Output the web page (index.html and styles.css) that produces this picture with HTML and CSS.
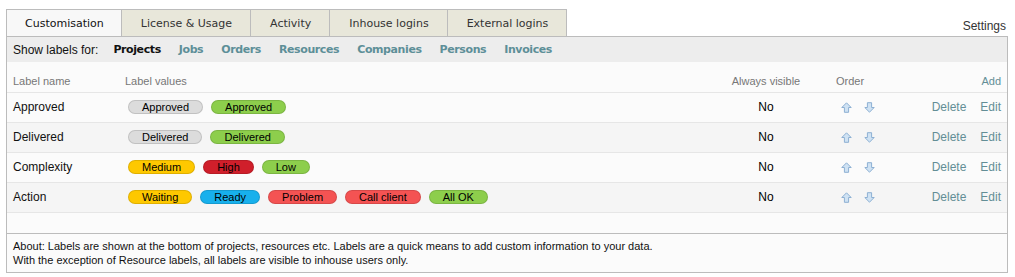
FILE: index.html
```html
<!DOCTYPE html>
<html>
<head>
<meta charset="utf-8">
<link rel="stylesheet" href="styles.css">
</head>
<body>
<div class="top">
  <ul class="tabs">
    <li class="tab active">Customisation</li>
    <li class="tab">License &amp; Usage</li>
    <li class="tab">Activity</li>
    <li class="tab">Inhouse logins</li>
    <li class="tab">External logins</li>
  </ul>
  <div class="settings">Settings</div>
</div>
<div class="panel">
  <div class="filter">
    <span class="filter-label">Show labels for:</span>
    <span class="fl current">Projects</span>
    <span class="fl">Jobs</span>
    <span class="fl">Orders</span>
    <span class="fl">Resources</span>
    <span class="fl">Companies</span>
    <span class="fl">Persons</span>
    <span class="fl">Invoices</span>
  </div>
  <table class="labels">
    <colgroup>
      <col class="c-name"><col class="c-values"><col class="c-vis"><col class="c-order"><col class="c-act">
    </colgroup>
    <thead>
      <tr>
        <th class="name">Label name</th>
        <th>Label values</th>
        <th class="vis">Always visible</th>
        <th class="order-h">Order</th>
        <th class="act"><span class="link">Add</span></th>
      </tr>
    </thead>
    <tbody>
      <tr>
        <td class="name">Approved</td>
        <td class="values"><span class="pill gray">Approved</span><span class="pill green">Approved</span></td>
        <td class="vis">No</td>
        <td class="order"><svg class="arr" viewBox="0 0 11 11"><path d="M5.5 0.8 L10.2 5.5 L7.6 5.5 L7.6 10.3 L3.4 10.3 L3.4 5.5 L0.8 5.5 Z"/></svg><svg class="arr down" viewBox="0 0 11 11"><path d="M5.5 10.2 L10.2 5.5 L7.6 5.5 L7.6 0.7 L3.4 0.7 L3.4 5.5 L0.8 5.5 Z"/></svg></td>
        <td class="act"><span class="link">Delete</span><span class="link">Edit</span></td>
      </tr>
      <tr class="alt">
        <td class="name">Delivered</td>
        <td class="values"><span class="pill gray">Delivered</span><span class="pill green">Delivered</span></td>
        <td class="vis">No</td>
        <td class="order"><svg class="arr" viewBox="0 0 11 11"><path d="M5.5 0.8 L10.2 5.5 L7.6 5.5 L7.6 10.3 L3.4 10.3 L3.4 5.5 L0.8 5.5 Z"/></svg><svg class="arr down" viewBox="0 0 11 11"><path d="M5.5 10.2 L10.2 5.5 L7.6 5.5 L7.6 0.7 L3.4 0.7 L3.4 5.5 L0.8 5.5 Z"/></svg></td>
        <td class="act"><span class="link">Delete</span><span class="link">Edit</span></td>
      </tr>
      <tr>
        <td class="name">Complexity</td>
        <td class="values"><span class="pill yellow">Medium</span><span class="pill red">High</span><span class="pill green">Low</span></td>
        <td class="vis">No</td>
        <td class="order"><svg class="arr" viewBox="0 0 11 11"><path d="M5.5 0.8 L10.2 5.5 L7.6 5.5 L7.6 10.3 L3.4 10.3 L3.4 5.5 L0.8 5.5 Z"/></svg><svg class="arr down" viewBox="0 0 11 11"><path d="M5.5 10.2 L10.2 5.5 L7.6 5.5 L7.6 0.7 L3.4 0.7 L3.4 5.5 L0.8 5.5 Z"/></svg></td>
        <td class="act"><span class="link">Delete</span><span class="link">Edit</span></td>
      </tr>
      <tr class="alt">
        <td class="name">Action</td>
        <td class="values"><span class="pill yellow">Waiting</span><span class="pill blue">Ready</span><span class="pill salmon">Problem</span><span class="pill salmon">Call client</span><span class="pill green">All OK</span></td>
        <td class="vis">No</td>
        <td class="order"><svg class="arr" viewBox="0 0 11 11"><path d="M5.5 0.8 L10.2 5.5 L7.6 5.5 L7.6 10.3 L3.4 10.3 L3.4 5.5 L0.8 5.5 Z"/></svg><svg class="arr down" viewBox="0 0 11 11"><path d="M5.5 10.2 L10.2 5.5 L7.6 5.5 L7.6 0.7 L3.4 0.7 L3.4 5.5 L0.8 5.5 Z"/></svg></td>
        <td class="act"><span class="link">Delete</span><span class="link">Edit</span></td>
      </tr>
      <tr class="empty"><td colspan="5"></td></tr>
    </tbody>
  </table>
  <div class="about">
    About: Labels are shown at the bottom of projects, resources etc. Labels are a quick means to add custom information to your data.<br>
    With the exception of Resource labels, all labels are visible to inhouse users only.
  </div>
</div>
</body>
</html>
```

FILE: styles.css
```css
* { box-sizing: border-box; }
html, body { background: #fff; }
body {
  margin: 0;
  padding: 9px 7px 0 6px;
  font-family: "Liberation Sans", Arial, sans-serif;
  font-size: 12px;
  color: #000;
}
.top {
  display: flex;
  align-items: flex-end;
  justify-content: space-between;
}
.tabs {
  list-style: none;
  margin: 0;
  padding: 0;
  display: flex;
}
.tab {
  height: 27px;
  padding: 0 18px 0 19px;
  display: flex;
  align-items: center;
  font-family: "DejaVu Sans", Verdana, sans-serif;
  font-size: 11px;
  color: #333;
  background: #e8e7da;
  border: 1px solid #bcbcbc;
  border-left: none;
  border-bottom: none;
}
.tab:first-child { border-left: 1px solid #bcbcbc; padding: 0 17px 0 18px; }
.tab.active { background: #f8f8f8; color: #111; }
.settings {
  font-size: 12px;
  color: #333;
  padding: 0 2px 3px 0;
}
.panel {
  border: 1px solid #bcbcbc;
  background: #fbfbfb;
}
.filter {
  background: #ededed;
  height: 25px;
  display: flex;
  align-items: center;
  padding-left: 6px;
  gap: 18px;
}
.filter-label { color: #111; margin-right: -3px; }
.fl {
  font-family: "DejaVu Sans", Verdana, sans-serif;
  font-weight: bold;
  font-size: 11px;
  letter-spacing: -0.4px;
  color: #5d8f98;
}
.fl.current { color: #111; }
.labels {
  width: 100%;
  border-collapse: collapse;
  table-layout: fixed;
}
.c-name { width: 112px; }
.c-vis { width: 100px; }
.c-order { width: 90px; }
.c-act { width: 101px; }
.labels th {
  font-weight: normal;
  font-size: 11px;
  color: #777;
  text-align: left;
  height: 30px;
  padding: 8px 6px 0;
  border-bottom: 1px solid #e6e6e6;
}
.labels td {
  height: 30px;
  padding: 0 6px;
  border-bottom: 1px solid #e6e6e6;
  vertical-align: middle;
}
.labels tr.alt td { background: #f5f5f5; }
.labels th.vis, .labels td.vis { text-align: center; }
.labels th.act, .labels td.act { text-align: right; }
.labels th.order-h { padding-left: 20px; }
.labels td.name { color: #111; }
.labels tr.empty td { height: 21px; border-bottom: 1px solid #bcbcbc; background: #fbfbfb; }
.values { padding-left: 9px !important; }
.pill {
  display: inline-block;
  height: 14px;
  line-height: 12px;
  padding: 0 13px;
  margin-right: 8px;
  border-radius: 7px;
  border: 1px solid rgba(0,0,0,0.12);
  font-size: 11px;
  color: #000;
  vertical-align: middle;
}
.gray { background: #dcdcdc; }
.green { background: #8dce4c; }
.yellow { background: #fec800; }
.red { background: #d01f2b; }
.blue { background: #17b0ec; }
.salmon { background: #f45353; }
.order { padding-left: 25px !important; }
.arr {
  width: 11px;
  height: 11px;
  vertical-align: middle;
  margin-right: 12px;
}
.arr path { fill: #cfe2f3; stroke: #8db0d3; stroke-width: 1; }
.link { color: #638e96; }
.act .link + .link { margin-left: 14px; }
.about {
  padding: 5px 6px 5px 6px;
  font-size: 11px;
  line-height: 14px;
  color: #111;
}
```
